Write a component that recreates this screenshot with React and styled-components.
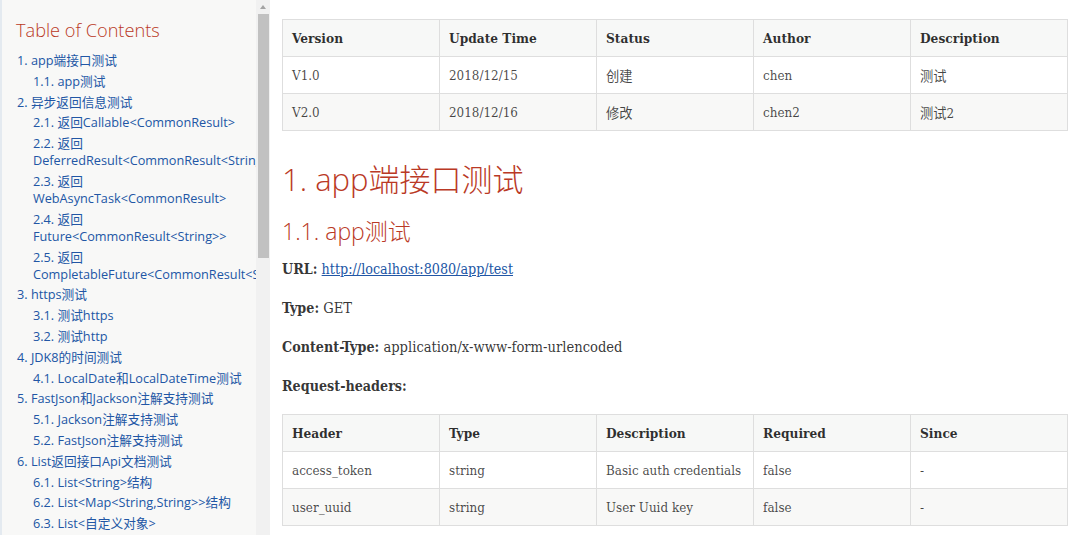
import styled, { createGlobalStyle } from "styled-components";

const GlobalStyle = createGlobalStyle`
  html, body {
    margin: 0;
    padding: 0;
    background: #fff;
  }
  body {
    font-family: "DejaVu Serif Condensed", "DejaVu Serif", "Noto Sans CJK SC", serif;
  }
`;

const Page = styled.div`
  display: flex;
  width: 1080px;
  height: 535px;
  overflow: hidden;
`;

const Sidebar = styled.aside`
  display: flex;
  flex-shrink: 0;
  width: 270px;
  height: 100%;
  box-sizing: border-box;
  background: #f8f8f7;
  border-left: 2px solid #e4eaf0;
`;

const TocPane = styled.nav`
  flex: 1;
  min-width: 0;
  overflow: hidden;
  padding: 19px 0 0 14px;
  font-family: "Open Sans", "Noto Sans CJK SC", sans-serif;
`;

const TocTitle = styled.div`
  font-size: 18.2px;
  font-weight: 300;
  line-height: 23px;
  color: #ba3925;
`;

const TocList = styled.ul`
  list-style: none;
  margin: ${(p) => (p.$nested ? 0 : 10)}px 0 0;
  padding: 0 0 0 ${(p) => (p.$nested ? 16 : 1)}px;
`;

const TocItem = styled.li`
  margin-top: 3.8px;
  font-size: 12.7px;
  line-height: 17px;
  color: #2156a5;
`;

const ScrollTrack = styled.div`
  display: flex;
  flex-direction: column;
  align-items: center;
  width: 14px;
  flex-shrink: 0;
  background: #f1f1f1;
`;

const ScrollArrow = styled.div`
  height: 14px;
  display: flex;
  align-items: center;
  justify-content: center;
`;

const ScrollThumb = styled.div`
  width: 11px;
  height: 244px;
  background: #c1c1c1;
`;

const Main = styled.main`
  flex: 1;
  min-width: 0;
  padding: 19px 12px 0;
  color: rgba(0, 0, 0, 0.8);
`;

const Table = styled.table`
  width: 100%;
  table-layout: fixed;
  border-collapse: collapse;
  border: 1px solid #dedede;
`;

const HeadCell = styled.th`
  height: 35px;
  padding: 0 9px 1px;
  text-align: left;
  font-size: 13.6px;
  font-weight: bold;
  background: #f7f8f7;
  border: 1px solid #dedede;
  color: rgba(0, 0, 0, 0.82);
`;

const Row = styled.tr`
  background: #fff;
  &:nth-child(even) {
    background: #f8f8f7;
  }
`;

const Cell = styled.td`
  height: 36px;
  padding: 0 9px;
  font-size: 13.3px;
  border: 1px solid #dedede;
  color: rgba(0, 0, 0, 0.72);
  white-space: nowrap;
`;

const Heading = styled.h2`
  margin: ${(p) => (p.$level === 2 ? "28px 0 17px" : "0 0 12px")};
  font-family: "Open Sans", "Noto Sans CJK SC", sans-serif;
  font-weight: 300;
  font-size: ${(p) => (p.$level === 2 ? "31px" : "23px")};
  line-height: ${(p) => (p.$level === 2 ? "40px" : "30px")};
  color: #ba3925;
`;

const Para = styled.p`
  margin: 0 0 17px;
  font-size: 14.6px;
  line-height: 22px;
`;

const Label = styled.strong`
  font-size: 14.2px;
  font-weight: bold;
`;

const Link = styled.a`
  color: #2156a5;
  font-size: 14.2px;
  text-decoration: underline;
`;

const toc = [
  { text: "1. app端接口测试", children: ["1.1. app测试"] },
  {
    text: "2. 异步返回信息测试",
    children: [
      "2.1. 返回Callable<CommonResult>",
      "2.2. 返回DeferredResult<CommonResult<String>>",
      "2.3. 返回WebAsyncTask<CommonResult>",
      "2.4. 返回Future<CommonResult<String>>",
      "2.5. 返回CompletableFuture<CommonResult<String>>",
    ],
  },
  { text: "3. https测试", children: ["3.1. 测试https", "3.2. 测试http"] },
  { text: "4. JDK8的时间测试", children: ["4.1. LocalDate和LocalDateTime测试"] },
  {
    text: "5. FastJson和Jackson注解支持测试",
    children: ["5.1. Jackson注解支持测试", "5.2. FastJson注解支持测试"],
  },
  {
    text: "6. List返回接口Api文档测试",
    children: [
      "6.1. List<String>结构",
      "6.2. List<Map<String,String>>结构",
      "6.3. List<自定义对象>",
    ],
  },
];

const versions = [
  ["V1.0", "2018/12/15", "创建", "chen", "测试"],
  ["V2.0", "2018/12/16", "修改", "chen2", "测试2"],
];

const headers = [
  ["access_token", "string", "Basic auth credentials", "false", "-"],
  ["user_uuid", "string", "User Uuid key", "false", "-"],
];

const DataTable = ({ columns, rows }) => (
  <Table>
    <thead>
      <tr>
        {columns.map((c) => (
          <HeadCell key={c}>{c}</HeadCell>
        ))}
      </tr>
    </thead>
    <tbody>
      {rows.map((r, i) => (
        <Row key={i}>
          {r.map((v, j) => (
            <Cell key={j}>{v}</Cell>
          ))}
        </Row>
      ))}
    </tbody>
  </Table>
);

const App = () => {
  return (
    <>
      <GlobalStyle />
      <Page>
        <Sidebar>
          <TocPane>
            <TocTitle>Table of Contents</TocTitle>
            <TocList>
              {toc.map((item) => (
                <TocItem key={item.text}>
                  {item.text}
                  <TocList $nested>
                    {item.children.map((c) => (
                      <TocItem key={c}>{c}</TocItem>
                    ))}
                  </TocList>
                </TocItem>
              ))}
            </TocList>
          </TocPane>
          <ScrollTrack>
            <ScrollArrow>
              <svg width="6" height="4" viewBox="0 0 6 4">
                <path d="M0 4 L3 0 L6 4 Z" fill="#a3a3a3" />
              </svg>
            </ScrollArrow>
            <ScrollThumb />
          </ScrollTrack>
        </Sidebar>
        <Main>
          <DataTable
            columns={["Version", "Update Time", "Status", "Author", "Description"]}
            rows={versions}
          />
          <Heading $level={2}>1. app端接口测试</Heading>
          <Heading as="h3" $level={3}>1.1. app测试</Heading>
          <Para>
            <Label>URL:</Label>{" "}
            <Link href="#">http://localhost:8080/app/test</Link>
          </Para>
          <Para>
            <Label>Type:</Label> GET
          </Para>
          <Para>
            <Label>Content-Type:</Label> application/x-www-form-urlencoded
          </Para>
          <Para>
            <Label>Request-headers:</Label>
          </Para>
          <DataTable
            columns={["Header", "Type", "Description", "Required", "Since"]}
            rows={headers}
          />
        </Main>
      </Page>
    </>
  );
};

export default App;
